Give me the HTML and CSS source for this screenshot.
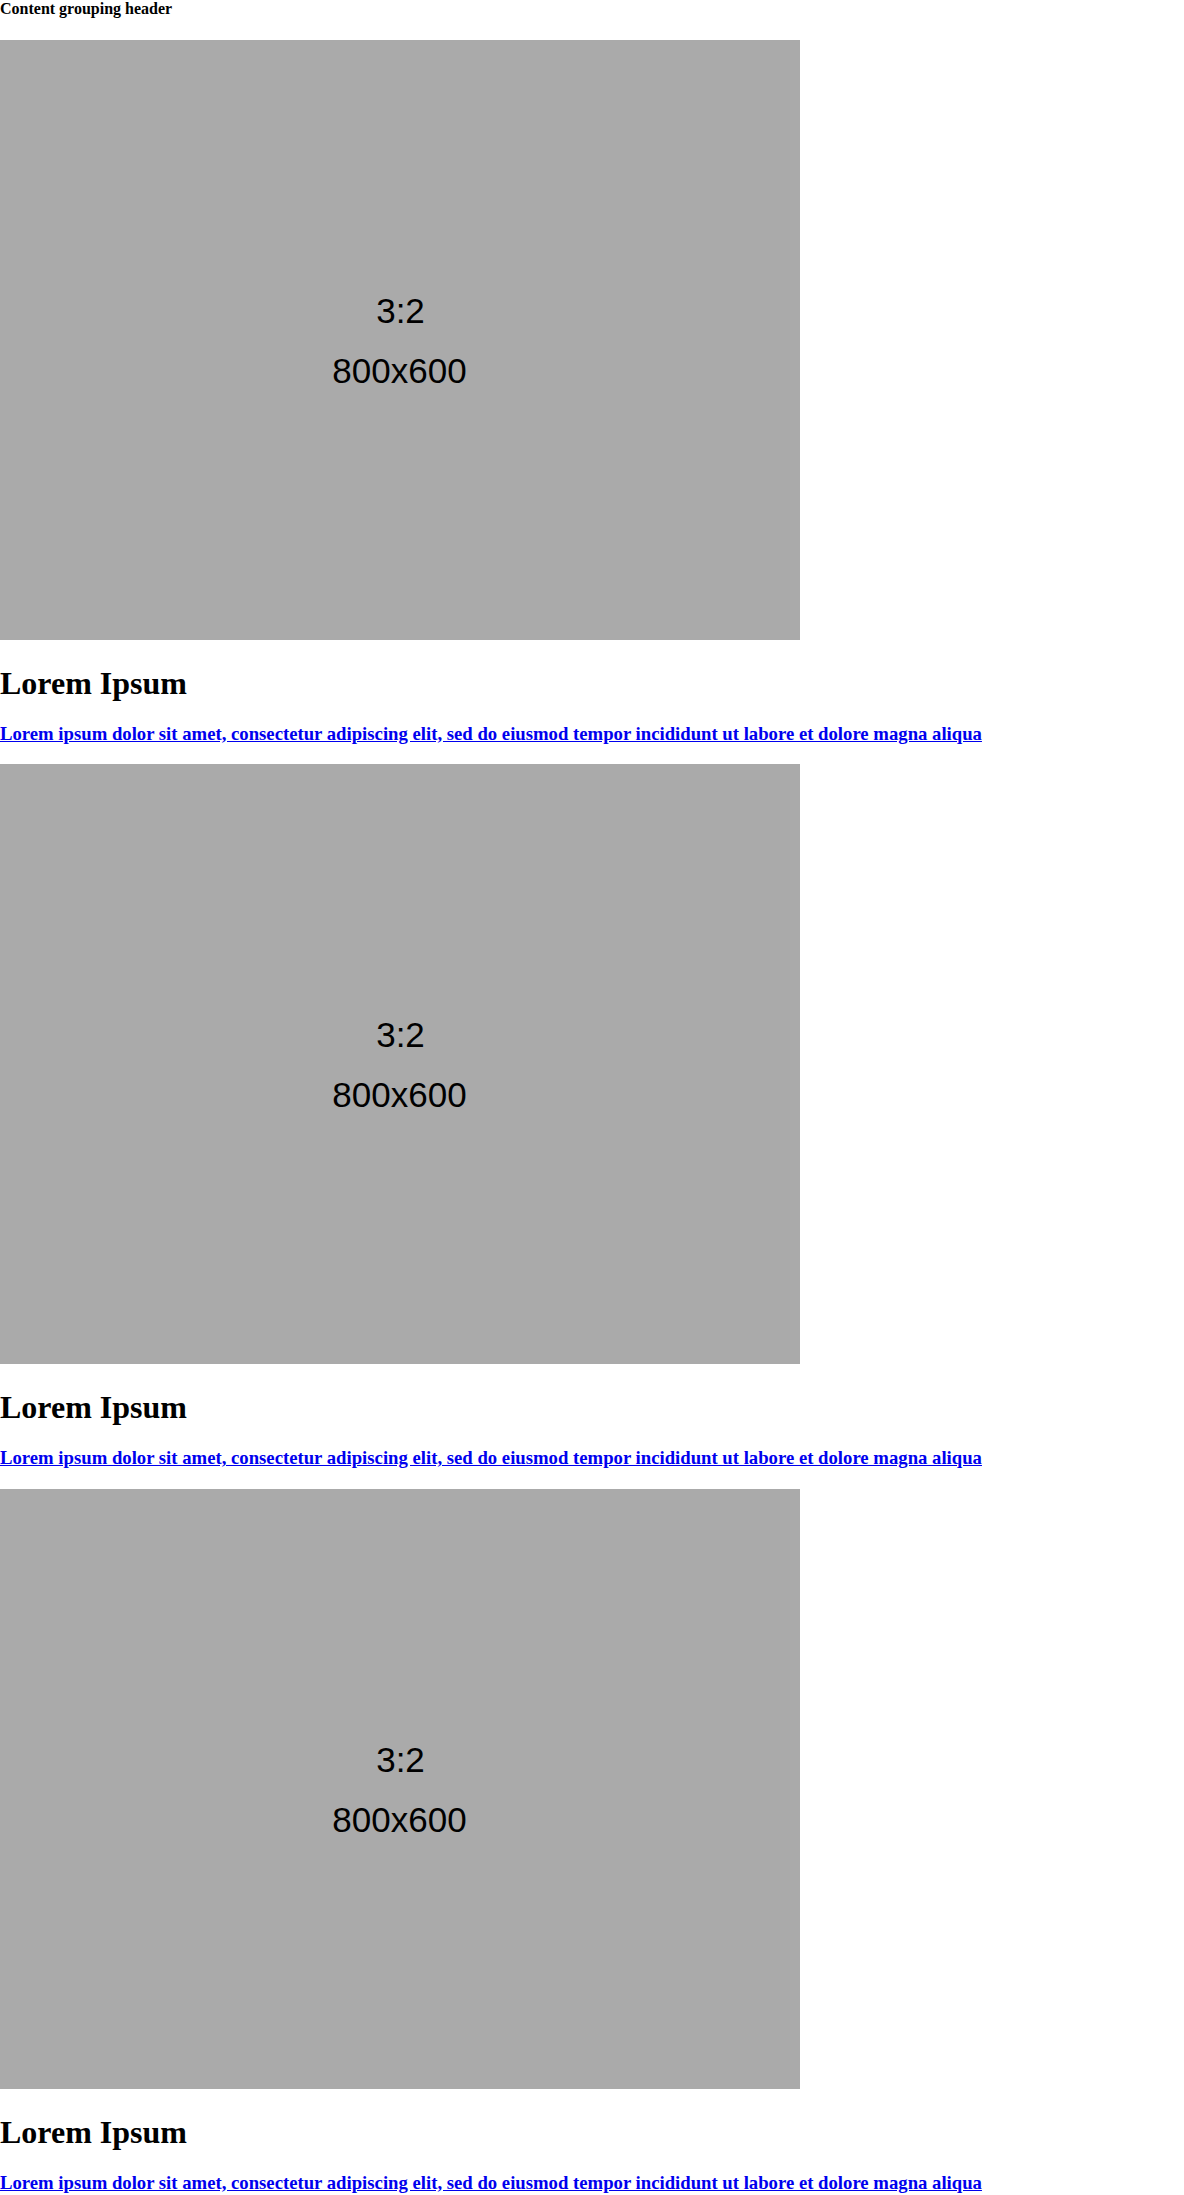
FILE: index.html
```html
<!DOCTYPE html>
<html>
<head>
<meta charset="utf-8">
<title>Content grouping</title>
<link rel="stylesheet" href="styles.css">
</head>
<body class="page">
<h4 class="group-header">Content grouping header</h4>

<div class="item">
  <div class="media"><svg class="ph" width="800" height="600" viewBox="0 0 800 600"><rect width="800" height="600" fill="#aaaaaa"/><text x="400.5" y="282.7" text-anchor="middle" class="ph-text">3:2</text><text x="399.5" y="343.3" text-anchor="middle" class="ph-text">800x600</text></svg></div>
  <h1 class="item-title">Lorem Ipsum</h1>
  <h3 class="item-link"><a href="#">Lorem ipsum dolor sit amet, consectetur adipiscing elit, sed do eiusmod tempor incididunt ut labore et dolore magna aliqua</a></h3>
</div>

<div class="item">
  <div class="media"><svg class="ph" width="800" height="600" viewBox="0 0 800 600"><rect width="800" height="600" fill="#aaaaaa"/><text x="400.5" y="282.7" text-anchor="middle" class="ph-text">3:2</text><text x="399.5" y="343.3" text-anchor="middle" class="ph-text">800x600</text></svg></div>
  <h1 class="item-title">Lorem Ipsum</h1>
  <h3 class="item-link"><a href="#">Lorem ipsum dolor sit amet, consectetur adipiscing elit, sed do eiusmod tempor incididunt ut labore et dolore magna aliqua</a></h3>
</div>

<div class="item">
  <div class="media"><svg class="ph" width="800" height="600" viewBox="0 0 800 600"><rect width="800" height="600" fill="#aaaaaa"/><text x="400.5" y="282.7" text-anchor="middle" class="ph-text">3:2</text><text x="399.5" y="343.3" text-anchor="middle" class="ph-text">800x600</text></svg></div>
  <h1 class="item-title">Lorem Ipsum</h1>
  <h3 class="item-link"><a href="#">Lorem ipsum dolor sit amet, consectetur adipiscing elit, sed do eiusmod tempor incididunt ut labore et dolore magna aliqua</a></h3>
</div>
</body>
</html>
```

FILE: styles.css
```css
html, body {
  margin: 0;
  padding: 0;
}
.page {
  font-family: "Liberation Serif", "Times New Roman", serif;
  font-size: 16px;
  color: #000;
  background: #fff;
}
.group-header {
  font-size: 16px;
  font-weight: bold;
  line-height: 18.4px;
  margin: 0 0 21.28px 0;
}
.media {
  padding-bottom: 4px;
}
.ph {
  display: block;
}
.ph-text {
  font-family: "Liberation Sans", Arial, sans-serif;
  font-size: 35px;
  fill: #000;
}
.item-title {
  font-size: 32px;
  font-weight: bold;
  line-height: 37px;
  margin: 21px 0;
}
.item-link {
  font-size: 18.72px;
  font-weight: bold;
  line-height: 22px;
  margin: 21px 0 19.5px 0;
}
.item-link a {
  color: #0000ee;
  text-decoration: underline;
}
```
